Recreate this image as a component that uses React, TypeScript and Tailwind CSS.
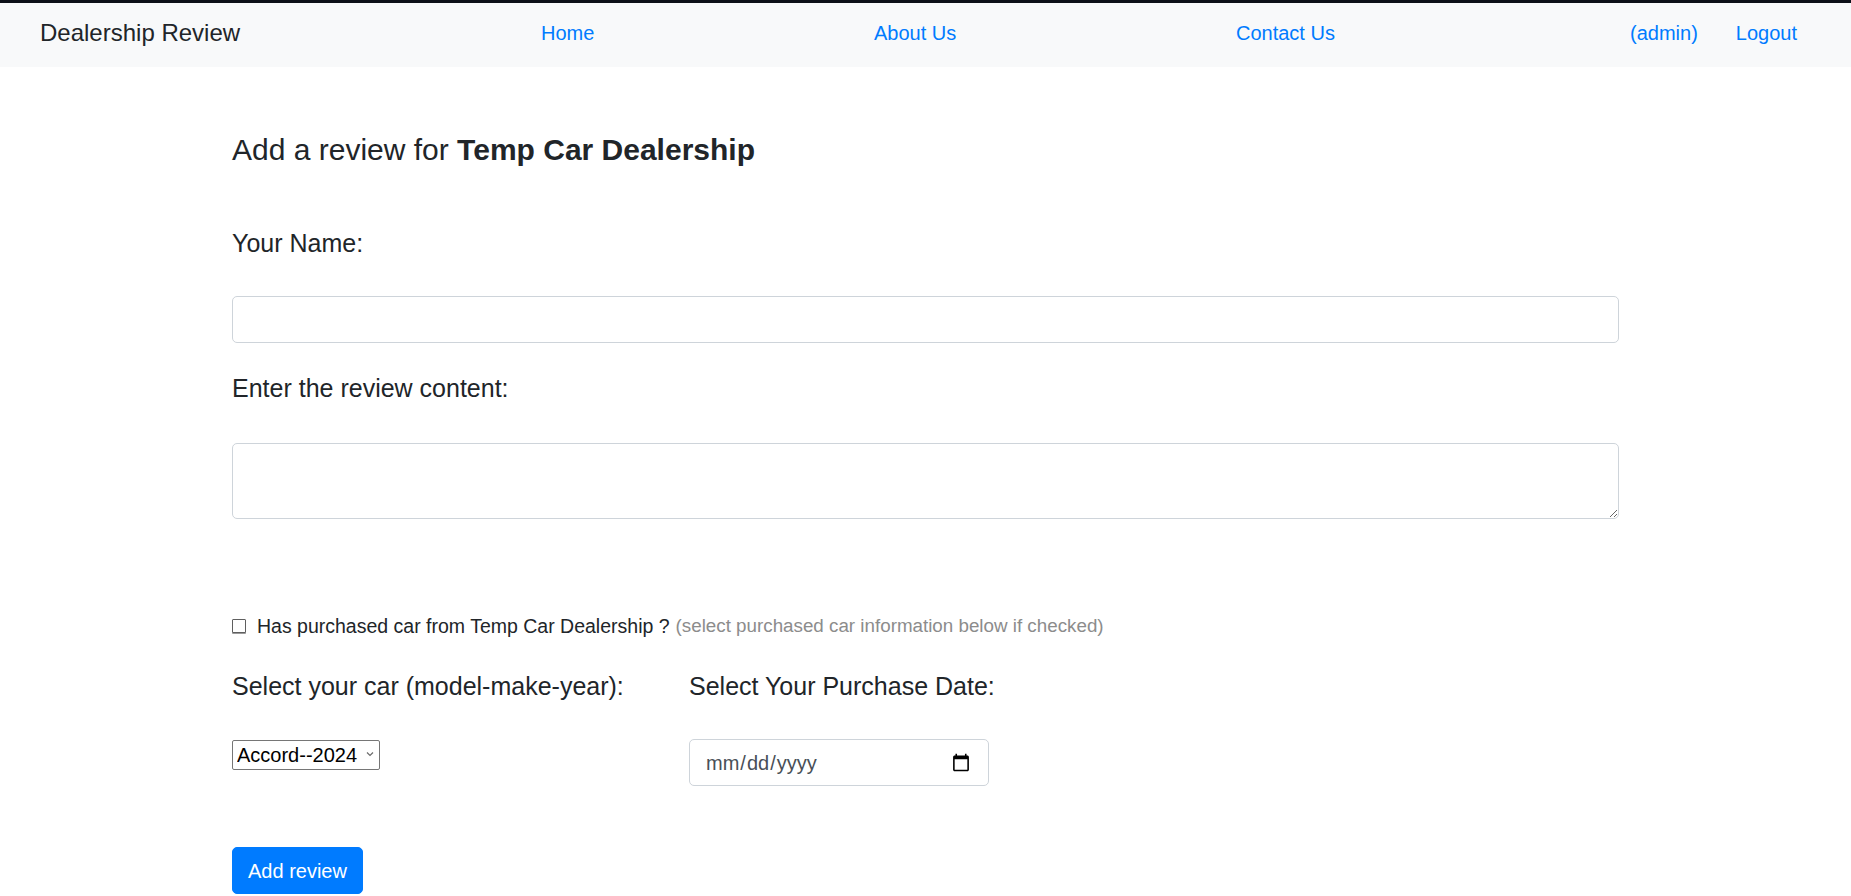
import { useState } from 'react';

const font = { fontFamily: '"Liberation Sans", Arial, sans-serif' };

function NavBar() {
  return (
    <div>
      <div className="h-[3px] bg-[#0c1018]" />
      <nav className="flex h-[64px] items-center bg-[#f8f9fa] pb-[4px]">
        <div className="w-[541px] pl-[40px] text-[24px] leading-[30px] text-[#212529]">Dealership Review</div>
        <div className="w-[333px]">
          <a href="#" className="text-[20px] leading-[30px] text-[#007bff]">Home</a>
        </div>
        <div className="w-[362px]">
          <a href="#" className="text-[20px] leading-[30px] text-[#007bff]">About Us</a>
        </div>
        <div className="flex-1">
          <a href="#" className="text-[20px] leading-[30px] text-[#007bff]">Contact Us</a>
        </div>
        <div className="flex items-center gap-[38px] pr-[54px] text-[20px] leading-[30px] text-[#007bff]">
          <a href="#">(admin)</a>
          <a href="#">Logout</a>
        </div>
      </nav>
    </div>
  );
}

export default function App() {
  const [name, setName] = useState('');
  const [content, setContent] = useState('');
  const [purchased, setPurchased] = useState(false);
  const [car, setCar] = useState('Accord--2024');
  const [date, setDate] = useState('');

  return (
    <div className="min-h-screen bg-white text-[#212529]" style={font}>
      <NavBar />
      <main className="mx-auto w-[1387px] pt-[65px]">
        <h4 className="text-[30px] leading-[36px] font-medium">
          Add a review for <b className="font-bold">Temp Car Dealership</b>
        </h4>

        <h5 className="mt-[60px] text-[25px] leading-[30px] font-medium">Your Name:</h5>
        <input
          type="text"
          className="mt-[38px] block h-[47px] w-full rounded-[5px] border border-[#ced4da] bg-white px-[15px] text-[20px] text-[#495057] outline-none"
          value={name}
          onChange={(e) => setName(e.target.value)}
        />

        <h5 className="mt-[30px] text-[25px] leading-[30px] font-medium">Enter the review content:</h5>
        <textarea
          rows={2}
          className="mt-[40px] block h-[76px] w-full rounded-[5px] border border-[#ced4da] bg-white px-[15px] py-[7px] text-[20px] text-[#495057] outline-none"
          value={content}
          onChange={(e) => setContent(e.target.value)}
        />

        <label className="mt-[92px] flex h-[30px] items-center leading-[30px]">
          <input
            type="checkbox"
            checked={purchased}
            onChange={(e) => setPurchased(e.target.checked)}
            className="mr-[11px] h-[14px] w-[14px] shrink-0 appearance-none rounded-[1px] border border-[#5f5f5f] bg-white shadow-[0_1px_0_#9a9a9a] checked:bg-[#007bff]"
          />
          <span className="text-[19.5px]">Has purchased car from Temp Car Dealership ?</span>
          <span className="ml-[6px] text-[18.8px] text-[#8c8c8c]">(select purchased car information below if checked)</span>
        </label>

        <div className="mt-[30px] flex">
          <div className="w-[457px]">
            <h5 className="text-[25px] leading-[30px] font-medium">Select your car (model-make-year):</h5>
            <div className="relative mt-[39px] w-[148px]">
              <select
                value={car}
                onChange={(e) => setCar(e.target.value)}
                className="block h-[30px] w-full appearance-none rounded-[2px] border border-[#767676] bg-white pl-[4px] pr-[18px] text-[20px] leading-[28px] text-black outline-none"
              >
                <option>Accord--2024</option>
                <option>Civic--2023</option>
                <option>Pilot--2022</option>
              </select>
              <svg
                className="pointer-events-none absolute right-[6px] top-[11px]"
                width="8"
                height="6"
                viewBox="0 0 8 6"
                fill="none"
                stroke="#6b6b6b"
                strokeWidth="1.2"
              >
                <path d="M1 1.5 4 4.5 7 1.5" />
              </svg>
            </div>
          </div>
          <div>
            <h5 className="text-[25px] leading-[30px] font-medium">Select Your Purchase Date:</h5>
            <input
              type="date"
              value={date}
              onChange={(e) => setDate(e.target.value)}
              className="mt-[38px] block h-[47px] w-[300px] rounded-[5px] border border-[#ced4da] bg-white px-[15px] text-[20px] text-[#495057] outline-none"
            />
          </div>
        </div>

        <button className="mt-[61px] block h-[47px] rounded-[5px] border border-[#007bff] bg-[#007bff] px-[15px] text-[20px] leading-[30px] text-white">
          Add review
        </button>
      </main>
    </div>
  );
}
